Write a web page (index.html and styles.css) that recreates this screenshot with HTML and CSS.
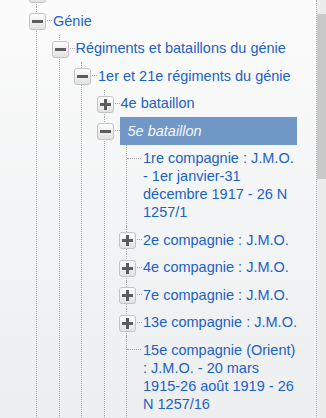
FILE: index.html
```html
<!DOCTYPE html>
<html lang="fr">
<head>
    <meta charset="UTF-8">
    <meta name="viewport" content="width=device-width, initial-scale=1.0">
    <title>Inventaire - Génie</title>
    <link rel="stylesheet" href="styles.css">
</head>
<body>
    <div class="frame">
        <div class="panel">
            <ul class="tree">
                <li class="node">
                    <div class="row">
                        <span class="toggle"><svg width="11" height="11" viewBox="0 0 11 11"><rect x="0" y="4" width="11" height="3" fill="#5c5c5c"/><rect x="4" y="0" width="3" height="11" fill="#5c5c5c"/></svg></span>
                        <span class="dash"></span>
                        <a class="label"></a>
                    </div>
                </li>
                <li class="node">
                    <div class="row">
                        <span class="toggle"><svg width="11" height="11" viewBox="0 0 11 11"><rect x="0" y="4" width="11" height="3" fill="#5c5c5c"/></svg></span>
                        <span class="dash"></span>
                        <a class="label">Génie</a>
                    </div>
                    <ul>
                        <li class="node">
                            <div class="row">
                                <span class="toggle"><svg width="11" height="11" viewBox="0 0 11 11"><rect x="0" y="4" width="11" height="3" fill="#5c5c5c"/></svg></span>
                                <span class="dash"></span>
                                <a class="label">Régiments et bataillons du génie</a>
                            </div>
                            <ul>
                                <li class="node">
                                    <div class="row">
                                        <span class="toggle"><svg width="11" height="11" viewBox="0 0 11 11"><rect x="0" y="4" width="11" height="3" fill="#5c5c5c"/></svg></span>
                                        <span class="dash"></span>
                                        <a class="label">1er et 21e régiments du génie</a>
                                    </div>
                                    <ul>
                                        <li class="node">
                                            <div class="row">
                                                <span class="toggle"><svg width="11" height="11" viewBox="0 0 11 11"><rect x="0" y="4" width="11" height="3" fill="#5c5c5c"/><rect x="4" y="0" width="3" height="11" fill="#5c5c5c"/></svg></span>
                                                <span class="dash"></span>
                                                <a class="label">4e bataillon</a>
                                            </div>
                                        </li>
                                        <li class="node">
                                            <div class="row">
                                                <span class="toggle"><svg width="11" height="11" viewBox="0 0 11 11"><rect x="0" y="4" width="11" height="3" fill="#5c5c5c"/></svg></span>
                                                <span class="dash"></span>
                                                <a class="label selected">5e bataillon</a>
                                            </div>
                                            <ul>
                                                <li class="node leaf">
                                                    <div class="row">
                                                        <span class="dash"></span>
                                                        <a class="label">1re compagnie : J.M.O. - 1er janvier-31 décembre 1917 - 26 N 1257/1</a>
                                                    </div>
                                                </li>
                                                <li class="node">
                                                    <div class="row">
                                                        <span class="toggle"><svg width="11" height="11" viewBox="0 0 11 11"><rect x="0" y="4" width="11" height="3" fill="#5c5c5c"/><rect x="4" y="0" width="3" height="11" fill="#5c5c5c"/></svg></span>
                                                        <span class="dash"></span>
                                                        <a class="label">2e compagnie : J.M.O.</a>
                                                    </div>
                                                </li>
                                                <li class="node">
                                                    <div class="row">
                                                        <span class="toggle"><svg width="11" height="11" viewBox="0 0 11 11"><rect x="0" y="4" width="11" height="3" fill="#5c5c5c"/><rect x="4" y="0" width="3" height="11" fill="#5c5c5c"/></svg></span>
                                                        <span class="dash"></span>
                                                        <a class="label">4e compagnie : J.M.O.</a>
                                                    </div>
                                                </li>
                                                <li class="node">
                                                    <div class="row">
                                                        <span class="toggle"><svg width="11" height="11" viewBox="0 0 11 11"><rect x="0" y="4" width="11" height="3" fill="#5c5c5c"/><rect x="4" y="0" width="3" height="11" fill="#5c5c5c"/></svg></span>
                                                        <span class="dash"></span>
                                                        <a class="label">7e compagnie : J.M.O.</a>
                                                    </div>
                                                </li>
                                                <li class="node">
                                                    <div class="row">
                                                        <span class="toggle"><svg width="11" height="11" viewBox="0 0 11 11"><rect x="0" y="4" width="11" height="3" fill="#5c5c5c"/><rect x="4" y="0" width="3" height="11" fill="#5c5c5c"/></svg></span>
                                                        <span class="dash"></span>
                                                        <a class="label">13e compagnie : J.M.O.</a>
                                                    </div>
                                                </li>
                                                <li class="node leaf">
                                                    <div class="row">
                                                        <span class="dash"></span>
                                                        <a class="label">15e compagnie (Orient) : J.M.O. - 20 mars 1915-26 août 1919 - 26 N 1257/16</a>
                                                    </div>
                                                </li>
                                            </ul>
                                        </li>
                                    </ul>
                                </li>
                            </ul>
                        </li>
                    </ul>
                </li>
            </ul>
        </div>
        <div class="scrollbar">
            <div class="thumb"></div>
        </div>
    </div>
</body>
</html>
```

FILE: styles.css
```css
html,
body {
    margin: 0;
    padding: 0;
    height: 100%;
    overflow: hidden;
}

body {
    font-family: "Liberation Sans", Arial, sans-serif;
    font-size: 14.5px;
    color: #1c62c4;
}

.frame {
    display: flex;
    height: 418px;
}

.panel {
    width: 317px;
    padding-right: 19px;
    box-sizing: border-box;
    border-right: 1px dotted #b4b6b8;
    background: linear-gradient(#fbfbfb, #eceef0);
    overflow: hidden;
}

.scrollbar {
    flex: 1;
    background-color: #ececec;
    padding-top: 14px;
}

.thumb {
    height: 165px;
    background-color: #c9c9c9;
}

ul {
    list-style: none;
    margin: 0;
    padding: 0 0 0 21.5px;
}

.tree {
    margin-top: -20.5px;
    padding-left: 36px;
}

.node {
    border-left: 1px dotted #a2a4a6;
}

.row {
    display: flex;
    align-items: flex-start;
}

.toggle {
    flex: none;
    display: flex;
    align-items: center;
    justify-content: center;
    width: 17px;
    height: 17px;
    box-sizing: border-box;
    margin: 6px 0 0 -8px;
    border: 1px solid #c3c3c3;
    border-radius: 3px;
    background: linear-gradient(#fdfdfd, #e2e2e2);
}

.dash {
    flex: none;
    width: 5px;
    margin: 13px 1px 0;
    border-top: 1px dotted #a2a4a6;
}

.leaf .dash {
    width: 14px;
    margin: 13px 2px 0 0;
}

.label {
    flex: 1;
    min-height: 18px;
    padding: 4.5px 0 5px;
    line-height: 18px;
    cursor: pointer;
}

.label.selected {
    margin-left: -1px;
    padding-left: 8px;
    background-color: #7097c5;
    color: #f4f6f9;
    font-style: italic;
}
```
